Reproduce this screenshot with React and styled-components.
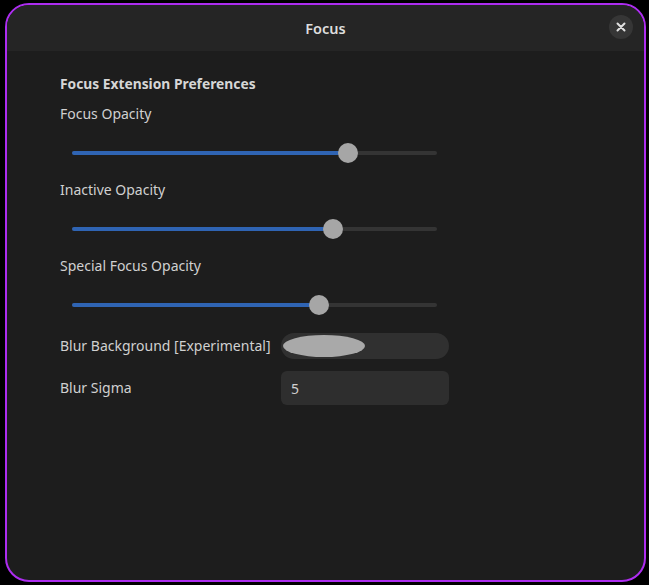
import React from 'react';
import styled, { createGlobalStyle } from 'styled-components';

const Global = createGlobalStyle`
  html, body { margin: 0; padding: 0; background: #000; }
  body { font-family: "Noto Sans", "Open Sans", sans-serif; color: #d8d8d8; }
`;

const Window = styled.div`
  box-sizing: border-box;
  margin: 3px 3px 0 5px;
  width: 641px;
  height: 579px;
  border: 2px solid #ad2df0;
  border-radius: 24px;
  background: #1d1d1d;
  overflow: hidden;
  display: flex;
  flex-direction: column;
`;

const HeaderBar = styled.div`
  height: 46px;
  background: #252525;
  display: flex;
  align-items: center;
  justify-content: center;
  position: relative;
  flex-shrink: 0;
`;

const Title = styled.div`
  font-size: 14.5px;
  font-weight: 600;
  color: #dedede;
`;

const CloseButton = styled.div`
  position: absolute;
  right: 11px;
  top: 10px;
  width: 24px;
  height: 24px;
  border-radius: 50%;
  background: #363636;
  display: flex;
  align-items: center;
  justify-content: center;
`;

const Content = styled.div`
  padding: 23px 0 0 53px;
  display: flex;
  flex-direction: column;
`;

const Heading = styled.div`
  font-size: 13.8px;
  font-weight: 700;
  line-height: 20px;
  color: #d6d6d6;
  margin-bottom: 10px;
`;

const Label = styled.div`
  font-size: 14px;
  line-height: 20px;
  color: #d0d0d0;
`;

const SliderRow = styled.div`
  box-sizing: border-box;
  height: 56px;
  padding: 2px 0 0 12px;
  display: flex;
  align-items: center;
`;

const Track = styled.div`
  position: relative;
  width: 365px;
  height: 4px;
  border-radius: 2px;
  background: #343434;
`;

const Fill = styled.div`
  height: 100%;
  border-radius: 2px;
  background: #2f64b3;
`;

const Thumb = styled.div`
  position: absolute;
  top: 50%;
  width: 20px;
  height: 20px;
  margin: -10px 0 0 -10px;
  border-radius: 50%;
  background: #a6a6a6;
`;

const FormRow = styled.div`
  display: flex;
  align-items: center;
  height: ${p => p.h}px;
  margin-top: ${p => p.mt || 0}px;
`;

const FormLabel = styled(Label)`
  width: 221px;
`;

const Switch = styled.div`
  width: 168px;
  height: 26px;
  border-radius: 13px;
  background: #303030;
  display: flex;
  align-items: center;
  padding: 0 2px;
  box-sizing: border-box;
`;

const Knob = styled.div`
  width: 82px;
  height: 22px;
  border-radius: 50%;
  background: #a9a9a9;
`;

const Entry = styled.div`
  width: 168px;
  height: 34px;
  border-radius: 6px;
  background: #2e2e2e;
  box-sizing: border-box;
  padding-left: 10px;
  display: flex;
  align-items: center;
  font-size: 14px;
  color: #d0d0d0;
`;

const Slider = ({ value }) => (
  <SliderRow>
    <Track>
      <Fill style={{ width: `${value * 100}%` }} />
      <Thumb style={{ left: `${value * 100}%` }} />
    </Track>
  </SliderRow>
);

const sliders = [
  { label: 'Focus Opacity', value: 0.756 },
  { label: 'Inactive Opacity', value: 0.715 },
  { label: 'Special Focus Opacity', value: 0.677 },
];

export default function App() {
  return (
    <>
      <Global />
      <Window>
        <HeaderBar>
          <Title>Focus</Title>
          <CloseButton>
            <svg width="10" height="10" viewBox="0 0 10 10">
              <path d="M1.5 1.5 L8.5 8.5 M8.5 1.5 L1.5 8.5" stroke="#e0e0e0" strokeWidth="2" strokeLinecap="round" />
            </svg>
          </CloseButton>
        </HeaderBar>
        <Content>
          <Heading>Focus Extension Preferences</Heading>
          {sliders.map(s => (
            <React.Fragment key={s.label}>
              <Label>{s.label}</Label>
              <Slider value={s.value} />
            </React.Fragment>
          ))}
          <FormRow h={26} mt={1}>
            <FormLabel>Blur Background [Experimental]</FormLabel>
            <Switch><Knob /></Switch>
          </FormRow>
          <FormRow h={34} mt={12}>
            <FormLabel>Blur Sigma</FormLabel>
            <Entry>5</Entry>
          </FormRow>
        </Content>
      </Window>
    </>
  );
}
